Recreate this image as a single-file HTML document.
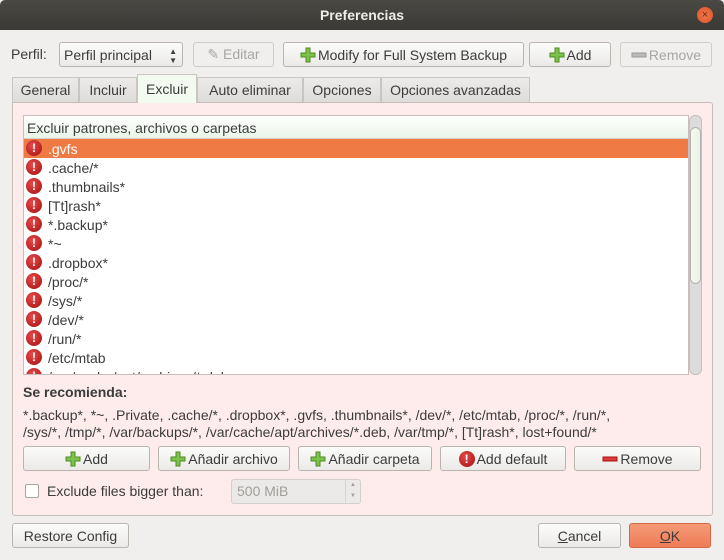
<!DOCTYPE html>
<html><head><meta charset="utf-8"><style>
*{box-sizing:border-box;margin:0;padding:0}
body{width:724px;height:560px;background:#f0efee;font-family:"Liberation Sans","DejaVu Sans",sans-serif;font-size:14px;color:#3c3c3c;position:relative;overflow:hidden}
.a{position:absolute}
.title{left:0;top:0;width:724px;height:30px;background:linear-gradient(#4a4944,#3a3935);color:#f0ede6;font-weight:bold;text-align:center;line-height:30px;font-size:14px;border-radius:5px 5px 0 0}
.close{left:697px;top:7px;width:16px;height:16px;border-radius:50%;background:radial-gradient(#f3774b,#d9532a);color:#6b2a14;font-size:11px;line-height:16px;text-align:center}
.btn{position:absolute;border:1px solid #b9b4ae;border-radius:3px;background:linear-gradient(#fbfbfa,#ebeae8);height:25px;color:#3c3c3c;white-space:nowrap;display:flex;align-items:center;justify-content:center}
.dis{color:#a8a6a3;border-color:#cfcbc7;background:#f0efee}
.plus{display:inline-block;margin-right:2px;flex:none}
.tab{position:absolute;top:77px;height:25px;border:1px solid #c9c5c0;border-bottom:none;background:linear-gradient(#ecebea,#dedcda);line-height:24px;text-align:center;color:#3c3c3c}
.panel{left:12px;top:102px;width:701px;height:414px;border:1px solid #c2beb9;background:#fdeceb;border-radius:0 3px 3px 3px}
.list{left:23px;top:115px;width:666px;height:260px;background:#fff;border:1px solid #c9bdbd;overflow:hidden}
.row{position:absolute;left:0;width:664px;height:19px;line-height:20px}
.row span{position:absolute;left:24px}
.ic{position:absolute;left:2px;top:1px;width:16px;height:16px;border-radius:50%;background:radial-gradient(circle at 40% 35%,#e84a4a,#a30f0f);color:#fff;font-weight:bold;font-size:12px;line-height:16px;text-align:center}
.ic2{display:inline-block;width:16px;height:16px;border-radius:50%;background:radial-gradient(circle at 40% 35%,#e84a4a,#a30f0f);color:#fff;font-weight:bold;font-size:12px;line-height:16px;text-align:center;margin-right:2px;flex:none}
</style></head><body>
<div class="a title">Preferencias</div>
<div class="a close">×</div>

<div class="a" style="left:11px;top:46px">Perfil:</div>
<div class="btn" style="left:59px;top:42px;width:124px;justify-content:flex-start;padding-left:4px">Perfil principal<span style="position:absolute;right:5px;font-size:8px;line-height:9px;top:4px">▲<br>▼</span></div>
<div class="btn dis" style="left:193px;top:42px;width:81px">✎ Editar</div>
<div class="btn" style="left:283px;top:42px;width:241px"><svg class="plus" width="16" height="16"><path d="M6 1h4v5h5v4h-5v5H6v-5H1V6h5z" fill="#7dc24a" stroke="#4e8a22"/></svg>Modify for Full System Backup</div>
<div class="btn" style="left:529px;top:42px;width:82px"><svg class="plus" width="16" height="16"><path d="M6 1h4v5h5v4h-5v5H6v-5H1V6h5z" fill="#7dc24a" stroke="#4e8a22"/></svg>Add</div>
<div class="btn dis" style="left:620px;top:42px;width:92px"><svg class="plus" width="16" height="16"><rect x="1" y="6" width="14" height="4" fill="#bbb" stroke="#999"/></svg>Remove</div>

<div class="a panel"></div>
<div class="tab" style="left:12px;width:67px">General</div>
<div class="tab" style="left:79px;width:58px">Incluir</div>
<div class="tab" style="left:137px;top:74px;height:29px;width:60px;background:#f3fbf1;line-height:28px">Excluir</div>
<div class="tab" style="left:197px;width:106px">Auto eliminar</div>
<div class="tab" style="left:303px;width:78px">Opciones</div>
<div class="tab" style="left:381px;width:149px">Opciones avanzadas</div>

<div class="a list">
<div class="row" style="top:0;height:23px;line-height:24px;background:linear-gradient(#fff,#eaf5e8);border-bottom:1px solid #d8d0d0;padding-left:3px">Excluir patrones, archivos o carpetas</div>
<div class="row" style="top:23px;background:#ef7a44;color:#fff"><div class="ic">!</div><span>.gvfs</span></div>
<div class="row" style="top:42px"><div class="ic">!</div><span>.cache/*</span></div>
<div class="row" style="top:61px"><div class="ic">!</div><span>.thumbnails*</span></div>
<div class="row" style="top:80px"><div class="ic">!</div><span>[Tt]rash*</span></div>
<div class="row" style="top:99px"><div class="ic">!</div><span>*.backup*</span></div>
<div class="row" style="top:118px"><div class="ic">!</div><span>*~</span></div>
<div class="row" style="top:137px"><div class="ic">!</div><span>.dropbox*</span></div>
<div class="row" style="top:156px"><div class="ic">!</div><span>/proc/*</span></div>
<div class="row" style="top:175px"><div class="ic">!</div><span>/sys/*</span></div>
<div class="row" style="top:194px"><div class="ic">!</div><span>/dev/*</span></div>
<div class="row" style="top:213px"><div class="ic">!</div><span>/run/*</span></div>
<div class="row" style="top:232px"><div class="ic">!</div><span>/etc/mtab</span></div>
<div class="row" style="top:251px"><div class="ic">!</div><span>/var/cache/apt/archives/*.deb</span></div>
</div>
<div class="a" style="left:689px;top:115px;width:13px;height:260px;background:#dcdcdc;border:1px solid #c9bdbd;border-radius:6px"></div>
<div class="a" style="left:690px;top:127px;width:11px;height:157px;background:linear-gradient(90deg,#f4fbf2,#e8f3e6);border:1px solid #b8b0b0;border-radius:6px"></div>

<div class="a" style="left:23px;top:384px;font-weight:bold">Se recomienda:</div>
<div class="a" style="left:23px;top:407px;line-height:17px;width:680px">*.backup*, *~, .Private, .cache/*, .dropbox*, .gvfs, .thumbnails*, /dev/*, /etc/mtab, /proc/*, /run/*,<br>/sys/*, /tmp/*, /var/backups/*, /var/cache/apt/archives/*.deb, /var/tmp/*, [Tt]rash*, lost+found/*</div>

<div class="btn" style="left:23px;top:446px;width:127px"><svg class="plus" width="16" height="16"><path d="M6 1h4v5h5v4h-5v5H6v-5H1V6h5z" fill="#7dc24a" stroke="#4e8a22"/></svg>Add</div>
<div class="btn" style="left:158px;top:446px;width:132px"><svg class="plus" width="16" height="16"><path d="M6 1h4v5h5v4h-5v5H6v-5H1V6h5z" fill="#7dc24a" stroke="#4e8a22"/></svg>Añadir archivo</div>
<div class="btn" style="left:298px;top:446px;width:134px"><svg class="plus" width="16" height="16"><path d="M6 1h4v5h5v4h-5v5H6v-5H1V6h5z" fill="#7dc24a" stroke="#4e8a22"/></svg>Añadir carpeta</div>
<div class="btn" style="left:440px;top:446px;width:126px"><span class="ic2">!</span>Add default</div>
<div class="btn" style="left:574px;top:446px;width:127px"><svg class="plus" width="16" height="16"><rect x="1" y="6" width="14" height="4" fill="#e0393b" stroke="#a11"/></svg>Remove</div>

<div class="a" style="left:25px;top:484px;width:14px;height:14px;border:1px solid #a9a49e;border-radius:2px;background:#fff"></div>
<div class="a" style="left:47px;top:483px">Exclude files bigger than:</div>
<div class="a" style="left:231px;top:479px;width:130px;height:25px;border:1px solid #d3cfcb;border-radius:3px;background:#eceae8;color:#a09d9a;line-height:23px;padding-left:5px">500 MiB<span style="position:absolute;right:0;top:0;width:15px;height:23px;border-left:1px solid #d8d4d0;font-size:6px;line-height:11px;text-align:center">▲<br>▼</span></div>

<div class="btn" style="left:12px;top:523px;width:117px">Restore Config</div>
<div class="btn" style="left:538px;top:523px;width:83px"><u>C</u>ancel</div>
<div class="btn" style="left:629px;top:523px;width:82px;background:linear-gradient(#f59a78,#ee7c55);border-color:#d46a45"><u>O</u>K</div>
</body></html>
